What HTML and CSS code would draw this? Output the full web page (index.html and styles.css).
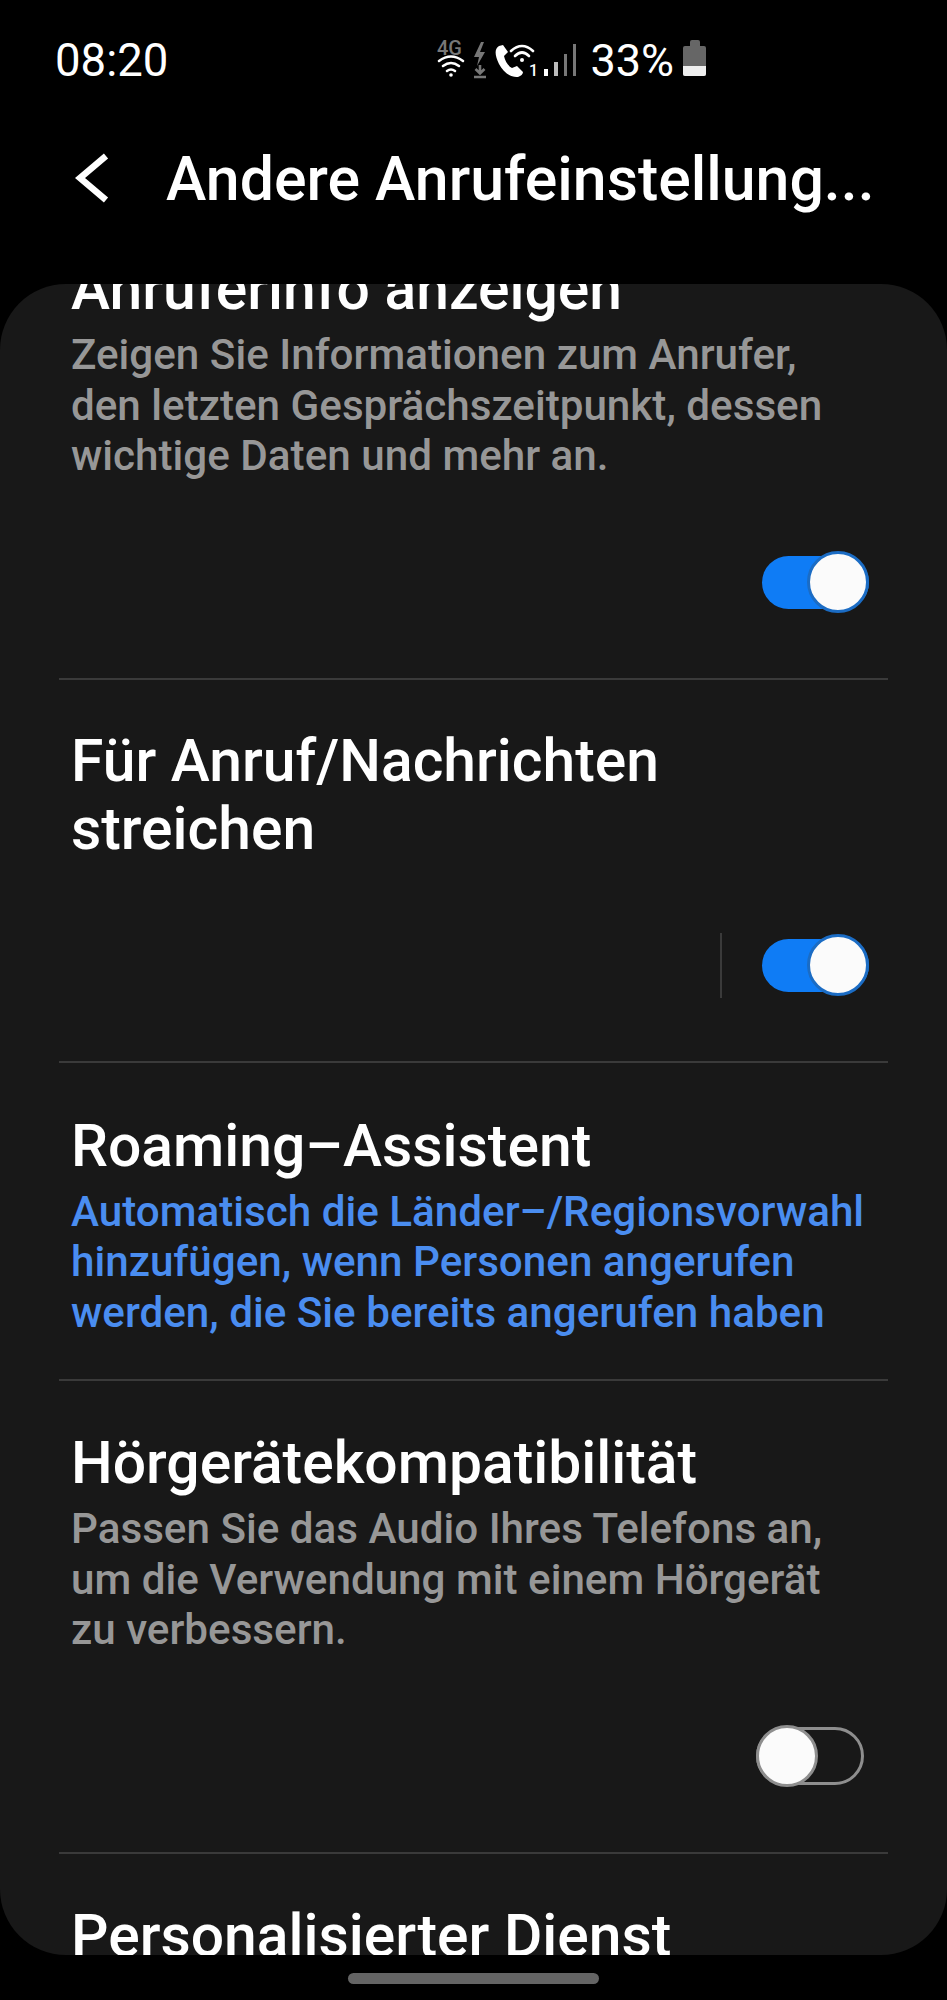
FILE: index.html
```html
<!DOCTYPE html>
<html lang="de">
<head>
  <meta charset="UTF-8">
  <meta name="viewport" content="width=device-width, initial-scale=1.0">
  <title>Andere Anrufeinstellungen</title>
  <link rel="stylesheet" href="styles.css">
</head>
<body>

<div class="status-bar">
  <div class="time">08:20</div>
  <div class="status-right">
    <svg class="status-icons" viewBox="0 0 140 40" width="140" height="40">
      <!-- 4G + wifi -->
      <text x="0" y="15" class="net-label">4G</text>
      <g fill="none" stroke="#fff" stroke-width="2.6" stroke-linecap="round">
        <path d="M2 21 Q14 12 26 21"/>
        <path d="M6 26 Q14 20 22 26"/>
        <path d="M10 31 Q14 28 18 31"/>
      </g>
      <circle cx="14" cy="35" r="1.8" fill="#fff"/>
      <!-- charging / download -->
      <path d="M44 2 L37 17 L42 17 L40 26 L48 12 L43 12 L47 2 Z" fill="#777"/>
      <path d="M43 25 V33 M38.5 29 L43 33.5 L47.5 29 M37 37 H49" fill="none" stroke="#777" stroke-width="2.6"/>
      <!-- call over wifi -->
      <path d="M62 6 C57 9 58 16 62 24 C66 32 74 38 81 37 C84 36 86 34 86 32 L80 26 L75 28 C71 26 68 21 67 16 L71 12 L66 5 Z" fill="#fff"/>
      <g fill="none" stroke="#fff" stroke-width="2.6" stroke-linecap="round">
        <path d="M74 11 Q85 1 96 11"/>
        <path d="M78 16 Q85 9 92 16"/>
      </g>
      <circle cx="85" cy="20" r="2" fill="#fff"/>
      <text x="92" y="36" class="sim-label">1</text>
      <!-- signal -->
      <rect x="107" y="29" width="4" height="7" fill="#fff"/>
      <rect x="117" y="22" width="4" height="14" fill="#bbb"/>
      <rect x="127" y="14" width="3" height="22" fill="#777"/>
      <rect x="136" y="4" width="3" height="32" fill="#777"/>
    </svg>
    <div class="battery-text">33%</div>
    <div class="battery">
      <div class="battery-cap"></div>
      <div class="battery-body"><div class="battery-level"></div></div>
    </div>
  </div>
</div>

<div class="app-header">
  <svg class="back" viewBox="0 0 34 50" width="34" height="50">
    <path d="M31 3 L5 25 L31 47" fill="none" stroke="#fff" stroke-width="6.5"/>
  </svg>
  <h1>Andere Anrufeinstellung...</h1>
</div>

<div class="panel">
  <div class="list">

    <div class="row first">
      <div class="row-title">Anruferinfo anzeigen</div>
      <div class="row-desc">Zeigen Sie Informationen zum Anrufer,<br>den letzten Gesprächszeitpunkt, dessen<br>wichtige Daten und mehr an.</div>
      <div class="row-switch">
        <div class="toggle on"><div class="thumb"></div></div>
      </div>
    </div>

    <div class="row second">
      <div class="row-title">Für Anruf/Nachrichten<br>streichen</div>
      <div class="row-switch">
        <div class="vline"></div>
        <div class="toggle on"><div class="thumb"></div></div>
      </div>
    </div>

    <div class="row text-only">
      <div class="row-title">Roaming–Assistent</div>
      <div class="row-desc blue">Automatisch die Länder–/Regionsvorwahl<br>hinzufügen, wenn Personen angerufen<br>werden, die Sie bereits angerufen haben</div>
    </div>

    <div class="row fourth">
      <div class="row-title">Hörgerätekompatibilität</div>
      <div class="row-desc">Passen Sie das Audio Ihres Telefons an,<br>um die Verwendung mit einem Hörgerät<br>zu verbessern.</div>
      <div class="row-switch">
        <div class="toggle off"><div class="thumb"></div></div>
      </div>
    </div>

    <div class="row last">
      <div class="row-title">Personalisierter Dienst</div>
    </div>

  </div>
</div>

<div class="home-bar"></div>

</body>
</html>
```

FILE: styles.css
```css
* {
  box-sizing: border-box;
}
html, body {
  margin: 0;
  height: 2000px;
  background: #000;
  overflow: hidden;
}
body {
  font-family: Roboto, "Noto Sans", sans-serif;
  color: #fff;
}

.status-bar {
  height: 100px;
  display: flex;
  align-items: flex-start;
  padding: 38px 241px 0 55px;
}
.time {
  font-size: 45.5px;
  line-height: 46px;
}
.status-right {
  margin-left: auto;
  display: flex;
  align-items: flex-start;
}
.status-icons {
  display: block;
  margin-top: 2px;
}
.net-label {
  font: 500 20px Roboto, sans-serif;
  fill: #777;
}
.sim-label {
  font: 500 16px Roboto, sans-serif;
  fill: #fff;
}
.battery-text {
  font-size: 45px;
  line-height: 46px;
  margin-left: 13px;
}
.battery {
  margin: 2px 0 0 9px;
  width: 23px;
}
.battery-cap {
  width: 10px;
  height: 6px;
  margin: 0 auto;
  background: #666;
  border-radius: 2px 2px 0 0;
}
.battery-body {
  height: 30px;
  background: #666;
  border-radius: 2px;
  display: flex;
  align-items: flex-end;
}
.battery-level {
  width: 100%;
  height: 10px;
  background: #eee;
  border-radius: 0 0 2px 2px;
}

.app-header {
  height: 184px;
  display: flex;
  align-items: flex-start;
  padding: 53px 0 0 75px;
}
.back {
  display: block;
  flex-shrink: 0;
}
h1 {
  margin: 0 0 0 57px;
  font-size: 60.8px;
  font-weight: 500;
  line-height: 54px;
  white-space: nowrap;
}

.panel {
  height: 1671px;
  background: #181818;
  border-radius: 66px;
  overflow: hidden;
}
.list {
  margin: -29px 59px 0;
}
.row {
  padding: 48px 0 63px;
  border-bottom: 2px solid #3a3a3a;
}
.row.first {
  padding-top: 0;
}
.row.second {
  padding-top: 47px;
}
.row.second .row-switch {
  margin-top: 70px;
}
.row.text-only {
  padding: 49px 0 41px;
}
.row.last {
  padding-top: 48px;
  border-bottom: none;
}
.row-title {
  padding-left: 12px;
  font-size: 58.8px;
  font-weight: 500;
  line-height: 68px;
}
.row-desc {
  margin-top: 7px;
  padding-left: 12px;
  font-size: 42.2px;
  font-weight: 500;
  line-height: 50.5px;
  white-space: nowrap;
  color: #979797;
}
.row-desc.blue {
  color: #4a8df0;
}
.row-switch {
  display: flex;
  justify-content: flex-end;
  align-items: center;
  height: 65px;
  margin-top: 68px;
  padding-right: 19px;
}
.vline {
  width: 2px;
  height: 65px;
  background: #3a3a3a;
  margin-right: 40px;
}
.toggle {
  position: relative;
  width: 107px;
  height: 53px;
  border-radius: 27px;
}
.toggle.on {
  background: #0f7cf5;
}
.toggle.off {
  width: 108px;
  height: 58px;
  margin-right: 5px;
  border: 3px solid #8e8e8e;
  border-radius: 29px;
}
.thumb {
  position: absolute;
  top: 50%;
  width: 62px;
  height: 62px;
  margin-top: -31px;
  background: #fbfbfb;
  border-radius: 50%;
}
.on .thumb {
  right: 0;
  border: 3px solid #1b6cc4;
}
.off .thumb {
  left: -3px;
  border: 3px solid #8e8e8e;
}

.home-bar {
  width: 251px;
  height: 11px;
  margin: 18px auto 0;
  background: #646464;
  border-radius: 6px;
}
```
